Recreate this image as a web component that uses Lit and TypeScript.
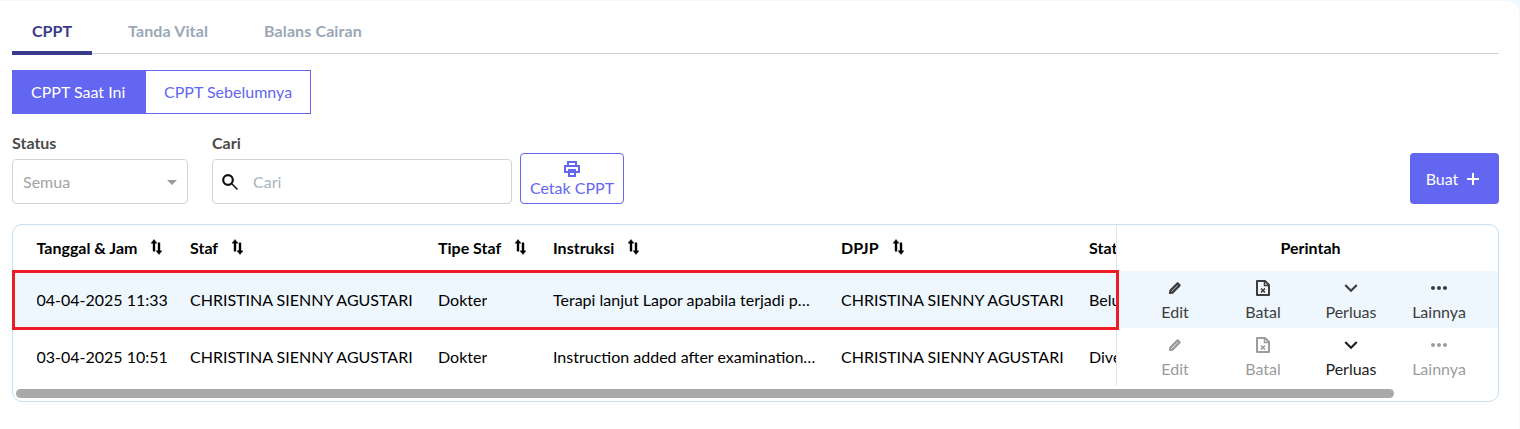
import { html, css, LitElement, svg } from 'lit';
import { customElement } from 'lit/decorators.js';

const icon = (d: string, size = 24) => html`
    <svg width=${size} height=${size} viewBox="0 0 24 24" fill="currentColor">${svg`<path d=${d}></path>`}</svg>
`;

const CHEVRON = 'M16.59 8.59 12 13.17 7.41 8.59 6 10l6 6 6-6z';
const DOTS = 'M6 10c-1.1 0-2 .9-2 2s.9 2 2 2 2-.9 2-2-.9-2-2-2zm12 0c-1.1 0-2 .9-2 2s.9 2 2 2 2-.9 2-2-.9-2-2-2zm-6 0c-1.1 0-2 .9-2 2s.9 2 2 2 2-.9 2-2-.9-2-2-2z';

const sortIcon = html`
    <svg width="11" height="16" viewBox="0 0 11 16" fill="currentColor" stroke="currentColor" stroke-width="0.4">
        <path d="M3 .4l3 3.8H4v8H2V4.200H0zM8 15.600l3-3.800H9V3.800H7v8H5z"></path>
    </svg>
`;

const plusIcon = html`
    <svg width="12" height="12" viewBox="0 0 12 12" fill="none" stroke="currentColor" stroke-width="2">
        <path d="M6 0v12M0 6h12"></path>
    </svg>
`;

const searchIcon = html`
    <svg width="16" height="16" viewBox="0 0 16 16" fill="none" stroke="#111">
        <circle cx="6" cy="6" r="4.800" stroke-width="2.200"></circle>
        <path d="M9.800 9.800L15.500 15.500" stroke-width="1.500"></path>
    </svg>
`;

const editIcon = html`
    <svg width="14" height="14" viewBox="0 0 14 14" fill="none" stroke="currentColor" stroke-width="2.200" stroke-linejoin="round">
        <path d="M2.400 9.600L9.600 2.400l2 2-7.200 7.200-2.400.400z"></path>
    </svg>
`;

const batalIcon = html`
    <svg width="14" height="16" viewBox="0 0 14 16" fill="none" stroke="currentColor">
        <path d="M1 1h8l4 4v10H1z" stroke-width="2" stroke-linejoin="round"></path>
        <path d="M8.500 1v4.500H13" stroke-width="1.500"></path>
        <path d="M5 8.500l4 4M9 8.500l-4 4" stroke-width="1.600"></path>
    </svg>
`;

const columns = ['Tanggal & Jam', 'Staf', 'Tipe Staf', 'Instruksi', 'DPJP', 'Status'];

const rows = [
    {
        cells: ['04-04-2025 11:33', 'CHRISTINA SIENNY AGUSTARI', 'Dokter', 'Terapi lanjut Lapor apabila terjadi perubahan', 'CHRISTINA SIENNY AGUSTARI', 'Belum Diverifikasi'],
        tinted: true,
        disabled: false,
    },
    {
        cells: ['03-04-2025 10:51', 'CHRISTINA SIENNY AGUSTARI', 'Dokter', 'Instruction added after examination of patient', 'CHRISTINA SIENNY AGUSTARI', 'Diverifikasi'],
        tinted: false,
        disabled: true,
    },
];

@customElement('app-root')
export class AppRoot extends LitElement {
    static styles = css`
        :host {
          display: block;
          height: 429px;
          box-sizing: border-box;
          background: #f1f8fe;
          padding: 1px 1px 0 0;
          font-family: Lato, "Liberation Sans", sans-serif;
          font-size: 16px;
          color: #000;
        }

        .card {
          height: 100%;
          box-sizing: border-box;
          background: #fff;
          padding: 9px 20px 0 12px;
          border-top-right-radius: 12px;
        }

        .tabs {
          display: flex;
          gap: 16px;
          height: 44px;
          border-bottom: 1px solid #cfcfd6;
          box-sizing: border-box;
        }

        .tab {
          padding: 0 20px;
          height: 45px;
          box-sizing: border-box;
          line-height: 41px;
          font-weight: 700;
          letter-spacing: 0.12px;
          color: #9aa7b8;
        }

        .tab.active {
          width: 80px;
          letter-spacing: 0;
          color: #3a3a8c;
          border-bottom: 4px solid #3a3a8c;
        }

        .toggle {
          display: flex;
          width: fit-content;
          margin-top: 16px;
          height: 44px;
        }

        .toggle div {
          box-sizing: border-box;
          border: 1px solid #6366f1;
          line-height: 42px;
          padding: 0 18px;
          color: #6366f1;
        }

        .toggle .on {
          width: 134px;
          background: #6366f1;
          color: #fff;
        }

        .toggle div + div {
          border-left: none;
        }

        .filters {
          display: flex;
          align-items: flex-end;
          margin-top: 19px;
        }

        .field + .field {
          margin-left: 24px;
        }

        .field label {
          display: block;
          font-weight: 700;
          line-height: 20px;
          color: #4a4a4a;
          margin-bottom: 6px;
        }

        .input {
          display: flex;
          align-items: center;
          box-sizing: border-box;
          height: 45px;
          border: 1px solid #d4d4d4;
          border-radius: 4px;
          color: #a3a3a3;
        }

        .select {
          width: 176px;
          padding: 0 10px;
          justify-content: space-between;
        }

        .caret {
          width: 0;
          height: 0;
          margin-top: 2px;
          border: 5px solid transparent;
          border-top: 5px solid #9a9a9a;
          border-bottom: none;
        }

        .search {
          width: 300px;
          padding-left: 9px;
          gap: 15px;
          color: #a9b4c2;
        }

        .print {
          display: flex;
          flex-direction: column;
          align-items: center;
          box-sizing: border-box;
          width: 104px;
          height: 51px;
          margin-left: 8px;
          padding-top: 7px;
          border: 1px solid #6366f1;
          border-radius: 4px;
          color: #6366f1;
        }

        .print span {
          margin-top: 1px;
          line-height: 20px;
        }

        .create {
          display: flex;
          align-items: center;
          justify-content: center;
          gap: 9px;
          box-sizing: border-box;
          width: 89px;
          height: 51px;
          margin-left: auto;
          padding-right: 4px;
          background: #6366f1;
          border-radius: 4px;
          color: #fff;
        }

        .table {
          position: relative;
          margin-top: 20px;
          height: 178px;
          box-sizing: border-box;
          border: 1px solid #c5dff5;
          border-radius: 10px;
        }

        .body {
          display: flex;
        }

        .scroll {
          flex: 1;
          min-width: 0;
          overflow: hidden;
          border-top-left-radius: 10px;
        }

        .line {
          display: grid;
          grid-template-columns: 165px 248px 115px 288px 248px 200px;
          width: 1264px;
          height: 58px;
          box-sizing: border-box;
          padding-bottom: 1px;
          align-items: center;
        }

        .line.head {
          height: 46px;
          font-weight: 700;
          padding-bottom: 2px;
        }

        .line.first {
          height: 57px;
          padding-bottom: 0;
        }

        .tinted {
          background: #eef6fe;
        }

        .cell {
          display: flex;
          align-items: center;
          gap: 14px;
          padding: 0 12px;
          white-space: nowrap;
          overflow: hidden;
          min-width: 0;
        }

        .cell:first-child {
          padding: 0 0 0 23.5px;
        }

        .cell span.clip {
          overflow: hidden;
          text-overflow: ellipsis;
        }

        .cell svg {
          flex: none;
        }

        .fixed {
          flex: none;
          width: 382px;
          box-sizing: border-box;
          border-left: 1px solid #d9e8f5;
        }

        .fixed .title {
          height: 46px;
          line-height: 46px;
          text-align: center;
          font-weight: 700;
          padding-left: 6px;
        }

        .actions {
          display: grid;
          grid-template-columns: repeat(4, 88px);
          padding-left: 14px;
          height: 58px;
          color: #3d3d3d;
        }

        .actions.first {
          height: 57px;
        }

        .action {
          display: flex;
          flex-direction: column;
          align-items: center;
          padding-top: 7px;
          box-sizing: border-box;
          line-height: 20px;
        }

        .glyph {
          display: flex;
          align-items: center;
          justify-content: center;
          height: 20px;
          margin-bottom: 4px;
        }

        .action.disabled {
          color: #9c9c9c;
        }

        .action.dark {
          color: #222;
        }

        .track {
          padding: 3px 104px 0 3px;
        }

        .thumb {
          height: 9px;
          border-radius: 5px;
          background: #a9a9a9;
        }

        .highlight {
          position: absolute;
          left: -1px;
          top: 45px;
          width: 1107px;
          height: 60px;
          box-sizing: border-box;
          border: 3px solid #ed1c24;
          pointer-events: none;
        }
    `;

    private renderAction(label: string, glyph: unknown, disabled: boolean, dark = false) {
        return html`
            <div class="action ${disabled ? 'disabled' : ''} ${dark ? 'dark' : ''}">
                <div class="glyph">${glyph}</div>
                <span>${label}</span>
            </div>
        `;
    }

    protected render() {
        return html`
            <div class="card">
                <div class="tabs">
                    <div class="tab active">CPPT</div>
                    <div class="tab">Tanda Vital</div>
                    <div class="tab">Balans Cairan</div>
                </div>

                <div class="toggle">
                    <div class="on">CPPT Saat Ini</div>
                    <div>CPPT Sebelumnya</div>
                </div>

                <div class="filters">
                    <div class="field">
                        <label>Status</label>
                        <div class="input select">Semua <i class="caret"></i></div>
                    </div>
                    <div class="field">
                        <label>Cari</label>
                        <div class="input search">${searchIcon} Cari</div>
                    </div>
                    <div class="print">
                        <svg width="16" height="16" viewBox="0 0 16 16" fill="none" stroke="currentColor" stroke-width="2">
                            <rect x="4" y="1" width="8" height="4"></rect>
                            <rect x="1" y="5" width="14" height="6"></rect>
                            <rect x="5" y="9" width="6" height="6"></rect>
                        </svg>
                        <span>Cetak CPPT</span>
                    </div>
                    <div class="create">Buat ${plusIcon}</div>
                </div>

                <div class="table">
                    <div class="body">
                        <div class="scroll">
                            <div class="line head">
                                ${columns.map(c => html`<div class="cell">${c} ${sortIcon}</div>`)}
                            </div>
                            ${rows.map((r, i) => html`
                                <div class="line ${i === 0 ? 'first' : ''} ${r.tinted ? 'tinted' : ''}">
                                    ${r.cells.map(c => html`<div class="cell"><span class="clip">${c}</span></div>`)}
                                </div>
                            `)}
                        </div>
                        <div class="fixed">
                            <div class="title">Perintah</div>
                            ${rows.map((r, i) => html`
                                <div class="actions ${i === 0 ? 'first' : ''} ${r.tinted ? 'tinted' : ''}">
                                    ${this.renderAction('Edit', editIcon, r.disabled)}
                                    ${this.renderAction('Batal', batalIcon, r.disabled)}
                                    ${this.renderAction('Perluas', icon(CHEVRON, 26), false, r.disabled)}
                                    ${this.renderAction('Lainnya', icon(DOTS, 24), r.disabled)}
                                </div>
                            `)}
                        </div>
                    </div>
                    <div class="track"><div class="thumb"></div></div>
                    <div class="highlight"></div>
                </div>
            </div>
        `;
    }
}
